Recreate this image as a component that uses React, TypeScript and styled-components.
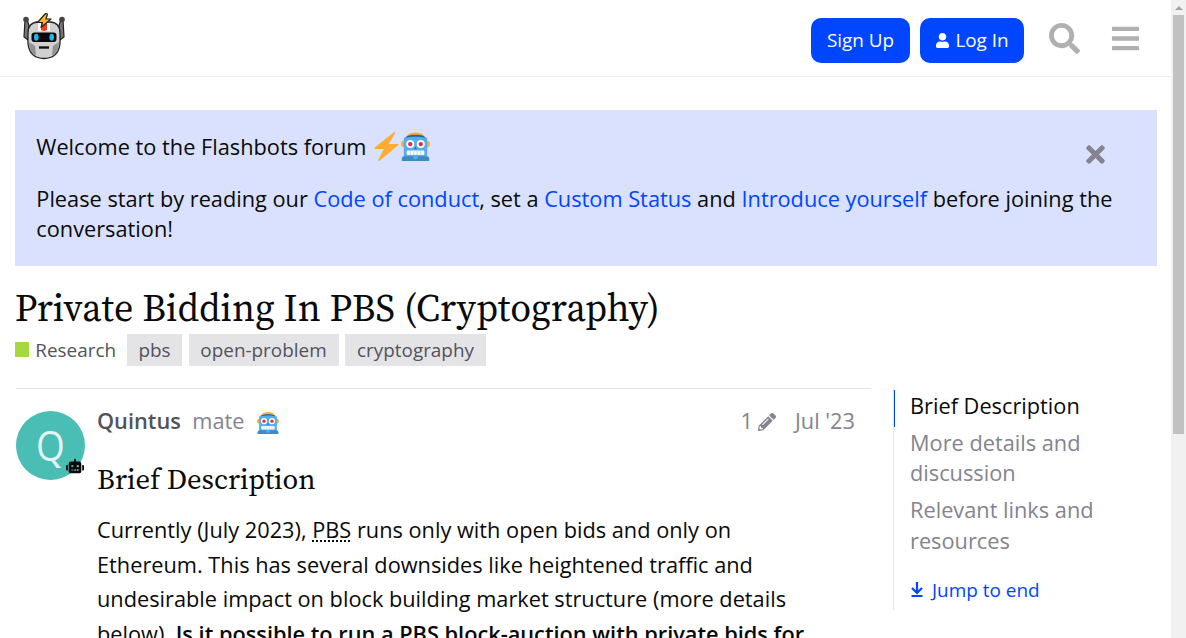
import React from "react";
import styled, { createGlobalStyle } from "styled-components";
import { FaUser, FaSearch, FaBars, FaTimes, FaPencilAlt, FaRobot } from "react-icons/fa";

const GlobalStyle = createGlobalStyle`
  * { box-sizing: border-box; }
  html, body { margin: 0; overflow: hidden; background: #fff; }
  body { font-family: "Open Sans", "Noto Sans", sans-serif; font-size: 21.75px; line-height: 30.4px; color: #0a0a0a; }
  p, h1, h2 { margin: 0; font-weight: 400; }
`;
const Shell = styled.div`display: flex; width: 1186px; height: 638px; overflow: hidden;`;
const Page = styled.div`width: 1171px; flex: none; display: flex; flex-direction: column;`;
const Scrollbar = styled.div`
  width: 15px; height: 638px; background: #f1f1f1; padding: 6px 2px 0;
  display: flex; flex-direction: column; align-items: center;
`;
const ScrollArrow = styled.div`
  flex: none; width: 0; height: 4px; border: solid transparent; border-width: 0 4px 4px; border-bottom-color: #a3a3a3;
`;
const ScrollThumb = styled.div`flex: none; width: 11px; height: 419px; margin-top: 5px; background: #c1c1c1;`;

const Header = styled.header`
  height: 77px; flex: none; border-bottom: 1px solid #ededed;
  display: flex; align-items: center; padding: 0 30px 0 20px;
`;
const Logo = styled.svg`width: 48px; height: 52px; margin-right: auto; margin-top: -3px;`;
const Button = styled.button<{ $width: number }>`
  width: ${(p) => p.$width}px; height: 45px; margin: 4px 10px 0 0; padding: 0; border: 0; border-radius: 10px;
  background: #0045ff; color: #fff; font: 18.9px "Open Sans", sans-serif;
  display: flex; align-items: center; justify-content: center; gap: 5px; white-space: nowrap;
`;
const HeaderIcon = styled.span<{ $left: number; $size: number }>`
  display: flex; margin-left: ${(p) => p.$left}px; font-size: ${(p) => p.$size}px; color: #b0b0b0;
`;

const Banner = styled.section`
  flex: none; margin: 33px 14px 0 15px; height: 156px; padding: 22px 50px 0 21.3px; background: #d9e1ff;
  display: flex; justify-content: space-between;
`;
const BannerText = styled.div`display: flex; flex-direction: column; gap: 21.5px; white-space: nowrap;`;
const BannerLine = styled.p`display: flex; align-items: center; height: 30.2px;`;
const Close = styled.span`display: flex; margin: 9px -2px 0 -40px; font-size: 27px; height: 28px; color: #84838f;`;
const Link = styled.a`color: #0045ff;`;
const Emoji = styled.svg<{ $size: number; $left?: number; $top?: number }>`
  width: ${(p) => p.$size}px; height: ${(p) => p.$size}px; flex: none;
  margin-left: ${(p) => p.$left ?? 0}px; margin-top: ${(p) => p.$top ?? -2}px;
`;

const Title = styled.h1`
  margin: 17px 0 0 14.7px; height: 51px; font: 38.05px/51px "Source Serif Pro", "Source Serif 4", "Liberation Serif", serif;
  white-space: nowrap;
`;
const Tags = styled.div`
  display: flex; align-items: center; height: 32px; margin-left: 15px; font-size: 18.9px; color: #53525c;
`;
const Category = styled.span`display: flex; align-items: center; gap: 6.3px; width: 112px;`;
const Swatch = styled.i`width: 14px; height: 15px; margin-top: -1px; background: #a6d93f;`;
const Tag = styled.span<{ $width: number }>`
  width: ${(p) => p.$width}px; height: 32px; margin-right: 6.5px; background: #e4e4e7;
  display: flex; align-items: center; justify-content: center;
`;

const Columns = styled.div`display: flex; margin-top: 22px; padding-left: 16px;`;
const Post = styled.article`
  width: 855px; flex: none; border-top: 1px solid #e4e4e7; padding-top: 22px; display: flex; gap: 12px;
`;
const Avatar = styled.div`
  position: relative; width: 69px; height: 69px; flex: none; border-radius: 50%; background: #4abdb5;
`;
const Initial = styled.span`
  display: block; color: #e3f5f3; font: 500 42px/67px "Open Sans", sans-serif; text-align: center; transform: scaleX(0.88);
`;
const Flair = styled.span`position: absolute; right: 1px; bottom: 5px; display: flex; font-size: 18px; color: #0a0a0a;`;
const Body = styled.div`flex: 1; padding-right: 16px; white-space: nowrap;`;
const Meta = styled.div`display: flex; align-items: center; height: 21px; color: #84838f;`;
const Author = styled.b`font-weight: 600; color: #53525c; margin-right: 11.5px;`;
const Edits = styled.span`display: flex; align-items: center; gap: 5px; margin: 0 19px 0 auto; svg { font-size: 18px; }`;
const Heading = styled.h2`
  margin-top: 28px; font: 28.6px/38px "Source Serif Pro", "Source Serif 4", "Liberation Serif", serif;
`;
const Copy = styled.p`margin-top: 15px; line-height: 34.5px;`;
const Abbr = styled.abbr`text-decoration: underline dotted;`;
const Strong = styled.strong`font-weight: 600;`;

const Timeline = styled.nav`
  margin-left: 22px; height: 222px; width: 240px; border-left: 1px solid #e4e4e7; padding-top: 2px; white-space: nowrap;
`;
const TocItem = styled.div<{ $active?: boolean }>`
  padding: 0.7px 0 6.1px 15px; border-left: 1px solid ${(p) => (p.$active ? "#0045ff" : "transparent")};
  color: ${(p) => (p.$active ? "#0a0a0a" : "#84838f")};
`;
const Jump = styled.a`
  display: flex; align-items: center; gap: 9px; padding-left: 17px; margin-top: 12.7px; color: #0045ff; font-size: 18.95px;
`;

function RobotEmoji({ size, left, top }: { size: number; left?: number; top?: number }) {
  return (
    <Emoji $size={size} $left={left} $top={top} viewBox="0 0 36 36">
      <circle cx="4" cy="15" r="4" fill="#ffac33" />
      <circle cx="32" cy="15" r="4" fill="#ffac33" />
      <path d="M6 7C8 1 14 .5 18 .5S28 1 30 7z" fill="#ffac33" />
      <path d="M3.5 8C5 5 12 4 18 4S31 5 32.5 8v24h-29z" fill="#55acee" />
      <path d="M6 7C8 4 14 3.5 18 3.5s10 .5 12 3.500c-6-1.500-18-1.500-24 0z" fill="#226699" />
      <path d="M1 33q0-3 3-3h28q3 0 3 3v3H1z" fill="#4289c1" />
      <circle cx="18" cy="31" r="3" fill="#55acee" />
      <circle cx="11.5" cy="15" r="5" fill="#fff" />
      <circle cx="24.5" cy="15" r="5" fill="#fff" />
      <circle cx="11.5" cy="15" r="2.7" fill="#dd2e44" />
      <circle cx="24.5" cy="15" r="2.7" fill="#dd2e44" />
      <path d="M16.5 21l1.5-3 1.5 3z" fill="#226699" />
      <rect x="7" y="23" width="22" height="5.5" rx="1.5" fill="#fff" />
      <path d="M11.5 23v5.5M16 23v5.5M20 23v5.5M24.5 23v5.5" stroke="#9acbf0" strokeWidth=".9" />
    </Emoji>
  );
}

export default function App() {
  return (
    <Shell>
      <GlobalStyle />
      <Page>
        <Header>
          <Logo viewBox="0 0 48 52">
            <path d="M5 9h2.500l3 12-2.500 8-4-3zM43 9h-2.500l-3 12 2.500 8 4-3z" fill="#777" stroke="#222" strokeWidth="1.2" />
            <circle cx="6" cy="8.5" r="2.8" fill="#444" />
            <circle cx="42" cy="8.5" r="2.8" fill="#444" />
            <path d="M8 22Q8 11.500 18 11H30Q40 11.500 40 22V33Q38 47.500 24 47.500T8 33z" fill="#d0d0d0" stroke="#222" strokeWidth="1.3" />
            <path d="M9 31l6 4 1 10Q9 41 9 31zM39 31l-6 4-1 10q7-4 7-14z" fill="#929292" />
            <path d="M18 12h12v8H18z" fill="#fff" />
            <path d="M21 12h6v7q-3 2-6 0z" fill="#f03c22" />
            <rect x="11.5" y="21.5" width="25" height="9.5" rx="3" fill="#090909" />
            <ellipse cx="16.3" cy="26.300" rx="2.3" ry="3.5" fill="#19b9eb" />
            <ellipse cx="31.7" cy="26.300" rx="2.3" ry="3.5" fill="#19b9eb" />
            <path d="M19 36.500h10" stroke="#111" strokeWidth="2.4" />
            <path d="M25.5 2.5L17.5 11.5h5L21 16.5l10-8.5h-5l1.500-5z" fill="#ffb52e" stroke="#222" strokeWidth="1.2" strokeLinejoin="round" />
          </Logo>
          <Button $width={99}>Sign Up</Button>
          <Button $width={104}><FaUser size={15} />Log In</Button>
          <HeaderIcon $left={15} $size={31}><FaSearch /></HeaderIcon>
          <HeaderIcon $left={30} $size={31}><FaBars /></HeaderIcon>
        </Header>
        <Banner>
          <BannerText>
            <BannerLine>
              Welcome to the Flashbots forum
              <Emoji $size={29} $left={6} viewBox="0 0 36 36">
                <path d="M32.9 15.4a1 1 0 0 0-.9-.6H20.8L28.6 1.6a1 1 0 0 0-1.4-1.3L3.4 19.2a1 1 0 0 0 .6 1.8h10.8L7.9 34.5a1 1 0 0 0 1.5 1.3l23.2-19.3a1 1 0 0 0 .3-1.1z" fill="#ffac33" />
              </Emoji>
              <RobotEmoji size={29} />
            </BannerLine>
            <p>
              Please start by reading our <Link>Code of conduct</Link>, set a <Link>Custom Status</Link> and{" "}
              <Link>Introduce yourself</Link> before joining the<br />conversation!
            </p>
          </BannerText>
          <Close><FaTimes /></Close>
        </Banner>
        <Title>Private Bidding In PBS (Cryptography)</Title>
        <Tags>
          <Category><Swatch />Research</Category>
          <Tag $width={55}>pbs</Tag>
          <Tag $width={150}>open-problem</Tag>
          <Tag $width={141}>cryptography</Tag>
        </Tags>
        <Columns>
          <Post>
            <Avatar><Initial>Q</Initial><Flair><FaRobot /></Flair></Avatar>
            <Body>
              <Meta>
                <Author>Quintus</Author>mate
                <RobotEmoji size={22} left={12} top={3} />
                <Edits>1<FaPencilAlt /></Edits>
                <span>Jul '23</span>
              </Meta>
              <Heading>Brief Description</Heading>
              <Copy>
                Currently (July 2023), <Abbr>PBS</Abbr> runs only with open bids and only on<br />
                Ethereum. This has several downsides like heightened traffic and<br />
                undesirable impact on block building market structure (more details<br />
                below). <Strong>Is it possible to run a PBS block-auction with private bids for</Strong>
              </Copy>
            </Body>
          </Post>
          <Timeline>
            <TocItem $active>Brief Description</TocItem>
            <TocItem>More details and<br />discussion</TocItem>
            <TocItem>Relevant links and<br />resources</TocItem>
            <Jump>
              <svg width="12" height="16" viewBox="0 0 12 16" fill="none" stroke="currentColor" strokeWidth="2.2">
                <path d="M6 0v11M1 6l5 5 5-5M.5 14h11" />
              </svg>
              Jump to end
            </Jump>
          </Timeline>
        </Columns>
      </Page>
      <Scrollbar><ScrollArrow /><ScrollThumb /></Scrollbar>
    </Shell>
  );
}
